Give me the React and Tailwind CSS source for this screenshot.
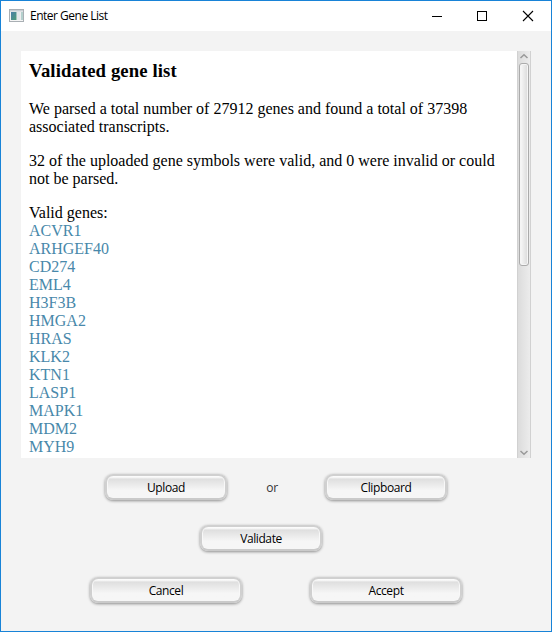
const GENES = ['ACVR1', 'ARHGEF40', 'CD274', 'EML4', 'H3F3B', 'HMGA2', 'HRAS', 'KLK2', 'KTN1', 'LASP1', 'MAPK1', 'MDM2', 'MYH9'];

function PushButton({ children, className }) {
  return (
    <button
      className={`flex h-[26px] items-center justify-center rounded-[8px] border-2 border-t-[#d0d0d0] border-x-[#d0d0d0] border-b-[#cacaca] bg-linear-to-b from-[#fbfbfb] from-[5%] via-[#dfdfdf] via-[14%] to-[#f6f6f6] to-[65%] bg-clip-padding pt-0.5 text-black shadow-[inset_1px_0_0_#f8f8f8,inset_-1px_0_0_#f8f8f8,0_1px_3px_rgba(0,0,0,0.42)] ${className}`}
    >
      {children}
    </button>
  );
}

function TitleBar() {
  return (
    <header className="flex h-[30px] shrink-0 items-center bg-white">
      <svg className="mb-px ml-2 shrink-0" width="16" height="14" viewBox="0 0 16 14">
        <defs>
          <linearGradient id="pane" x1="0" y1="0" x2="1" y2="1">
            <stop offset="0" stopColor="#4b7fa8" />
            <stop offset="1" stopColor="#4f9c78" />
          </linearGradient>
        </defs>
        <rect x="0.5" y="0.5" width="14" height="12" fill="#f5f5f5" stroke="#a9afb4" />
        <rect x="1" y="1" width="13" height="1.5" fill="#c8ced3" />
        <rect x="2" y="3" width="5.5" height="8" fill="url(#pane)" />
        <rect x="8" y="3" width="3.5" height="8" fill="#e5e7ea" />
        <rect x="12" y="3" width="2" height="8" fill="#b4d0cd" />
      </svg>
      <span className="ml-[5px] tracking-[-0.5px] text-black">Enter Gene List</span>
      <svg className="mr-[14px] mb-px ml-auto shrink-0" width="106" height="12" viewBox="0 0 106 12" fill="none" stroke="#000">
        <path d="M1 6.5h10" />
        <rect x="46.5" y="1.5" width="9" height="9" />
        <path d="M92 1l10 10M102 1l-10 10" strokeWidth="1.1" />
      </svg>
    </header>
  );
}

function ScrollBar() {
  return (
    <div className="flex w-[14px] shrink-0 flex-col items-center border-x border-[#d1d1d1] bg-linear-to-r from-[#dcdcdc] to-[#ececec]">
      <svg className="shrink-0" width="12" height="12" viewBox="0 0 12 12" fill="none" stroke="#999" strokeWidth="1.5">
        <path d="M2.5 7L6 3.8L9.5 7" />
      </svg>
      <div className="h-[203px] w-[10px] shrink-0 rounded-[3px] border border-[#ababab] bg-linear-to-r from-[#fafafa] to-[#dadada] shadow-[inset_0_0_0_1px_#f5f5f5]" />
      <svg className="mt-auto shrink-0" width="12" height="12" viewBox="0 0 12 12" fill="none" stroke="#999" strokeWidth="1.5">
        <path d="M2.5 5L6 8.2L9.5 5" />
      </svg>
    </div>
  );
}

export default function App() {
  return (
    <div className="flex h-[632px] w-[552px] flex-col overflow-hidden border border-[#1883d7] bg-[#f3f3f3] font-['Open_Sans',sans-serif] text-[12px] leading-4 tracking-[-0.4px]">
      <TitleBar />
      <main className="flex flex-1 flex-col px-5 pt-5">
        <section className="flex h-[407px] w-[510px] shrink-0">
          <div className="flex-1 overflow-hidden bg-white px-2 pt-[9px] font-['Liberation_Serif',serif] text-[16px] leading-[18px] tracking-normal text-black">
            <h3 className="mb-[19px] text-[18.72px] leading-[21px] font-bold tracking-[0.1px]">Validated gene list</h3>
            <p className="mb-4">
              We parsed a total number of 27912 genes and found a total of 37398
              <br />
              associated transcripts.
            </p>
            <p className="mb-4">
              32 of the uploaded gene symbols were valid, and 0 were invalid or could
              <br />
              not be parsed.
            </p>
            <p>Valid genes:</p>
            <ul className="text-[#4888aa]">
              {GENES.map((gene) => (
                <li key={gene}>{gene}</li>
              ))}
            </ul>
          </div>
          <ScrollBar />
        </section>
        <div className="mt-4 ml-[84px] flex items-center">
          <PushButton className="w-[122px]">Upload</PushButton>
          <span className="w-[98px] pt-0.5 pr-2 text-center text-[#333]">or</span>
          <PushButton className="w-[122px]">Clipboard</PushButton>
        </div>
        <div className="mt-[25px] ml-[179px] flex">
          <PushButton className="w-[122px]">Validate</PushButton>
        </div>
        <div className="mt-[26px] ml-[69px] flex gap-[68px]">
          <PushButton className="w-[152px]">Cancel</PushButton>
          <PushButton className="w-[152px]">Accept</PushButton>
        </div>
      </main>
    </div>
  );
}
